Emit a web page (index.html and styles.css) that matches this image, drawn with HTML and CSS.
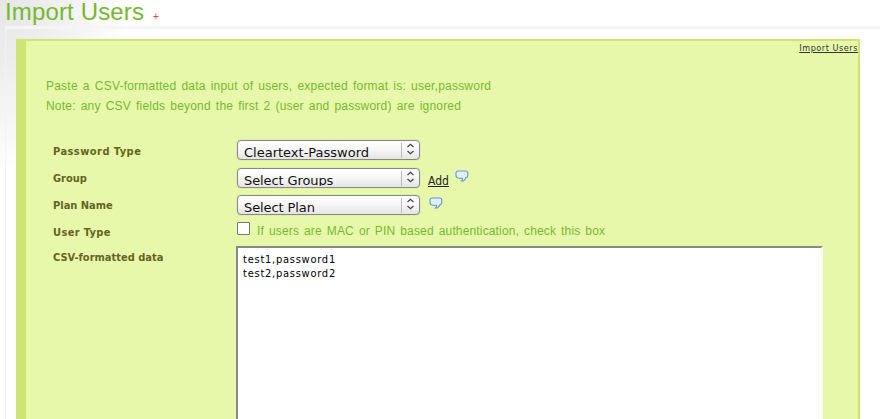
FILE: index.html
```html
<!DOCTYPE html>
<html lang="en">
<head>
<meta charset="utf-8">
<title>Import Users</title>
<link rel="stylesheet" href="styles.css">
</head>
<body>
<h1><span class="title">Import Users</span><span class="plus">+</span></h1>
<main>
<section class="panel">
<a class="tab"><span>Import Users</span></a>
<div class="intro">
<p><span class="i1">Paste a CSV-formatted data input of users, expected format is: user,password</span></p>
<p><span class="i2">Note: any CSV fields beyond the first 2 (user and password) are ignored</span></p>
</div>
<form>
<div class="row password"><label>Password Type</label><div class="select"><span>Cleartext-Password</span><i><svg width="9" height="12" viewBox="0 0 9 12"><path d="M1.5 4 4.5 1.2 7.5 4M1.5 8 4.5 10.8 7.5 8"/></svg></i></div></div>
<div class="row group"><label>Group</label><div class="select"><span>Select Groups</span><i><svg width="9" height="12" viewBox="0 0 9 12"><path d="M1.5 4 4.5 1.2 7.5 4M1.5 8 4.5 10.8 7.5 8"/></svg></i></div><a class="add">Add</a><svg class="tip" width="14" height="12" viewBox="0 0 14 12"><path d="M3.5 1H10.5Q12.800 1 12.800 3V5.500Q12.800 7.500 10.700 7.900 10.500 9.500 8.500 10.900L6.500 11Q8 9.500 7.500 8.200H4Q1 7.800 1 5.500V3Q1 1 3.500 1Z"/></svg></div>
<div class="row plan"><label>Plan Name</label><div class="select"><span>Select Plan</span><i><svg width="9" height="12" viewBox="0 0 9 12"><path d="M1.5 4 4.5 1.2 7.5 4M1.5 8 4.5 10.8 7.5 8"/></svg></i></div><svg class="tip" width="14" height="12" viewBox="0 0 14 12"><path d="M3.5 1H10.5Q12.800 1 12.800 3V5.500Q12.800 7.500 10.700 7.900 10.500 9.500 8.500 10.900L6.500 11Q8 9.500 7.500 8.200H4Q1 7.800 1 5.500V3Q1 1 3.500 1Z"/></svg></div>
<div class="row type"><label>User Type</label><span class="check"></span><span class="hint">If users are MAC or PIN based authentication, check this box</span></div>
<div class="row data"><label>CSV-formatted data</label><div class="area"><span>test1,password1</span><br><span>test2,password2</span></div></div>
</form>
</section>
</main>
</body>
</html>
```
FILE: styles.css
```css
* { box-sizing: border-box; }
body { margin: 0; height: 419px; overflow: hidden; font: 12px "Liberation Sans", sans-serif; color: #76b82f;
  background: #fff radial-gradient(ellipse 130px 175px at 0 0, #e6e6e6 0, #ededed 35%, #fff 100%) no-repeat; }
h1 { margin: 0; height: 26px; padding-left: 5px; display: flex; align-items: flex-start; font-weight: 400; font-size: 24px; line-height: 24px; white-space: nowrap; }
.title { width: 139px; height: 26px; letter-spacing: .15px; }
.plus { margin: 9px 0 0 9px; color: #f33; font-size: 10px; line-height: 16px; }
main { margin-left: 5px; height: 393px; overflow: hidden; border-top: 3px solid #f5f5f5; border-left: 1px solid #f3f3f3; padding: 10px 20px 0 10px; }
.panel { width: 844px; height: 380px; overflow: hidden; background: #e8f8ab; border: 2px solid #cee574; border-left-width: 10px; border-bottom: 0; }
.tab { display: block; height: 39px; text-align: right; font: 9px/14px "DejaVu Sans Condensed", "DejaVu Sans", sans-serif; letter-spacing: .55px; color: #333; text-decoration: underline; }
.intro { padding-left: 20px; margin-top: -4px; }
.intro p { margin: 0; height: 20px; line-height: 20px; white-space: nowrap; }
.i1, .i2, .hint { letter-spacing: .22px; word-spacing: 1.5px; }
.i2 { letter-spacing: .2px; }
form { padding: 24px 0 0 27px; }
.row { display: flex; align-items: flex-start; height: 27px; }
label { width: 184px; flex: none; color: #65651f; font: bold 11px/23px "DejaVu Sans Condensed", "DejaVu Sans", sans-serif; white-space: nowrap; }
.password label { letter-spacing: .45px; }
.type label { letter-spacing: .35px; }
.select { width: 183px; height: 20px; display: flex; border: 1px solid #888; border-radius: 4px; background: linear-gradient(#fff, #f6f6f6 50%, #e4e4e4); color: #111; overflow: hidden; box-shadow: 0 0 1px #999; }
.select span { width: 163px; height: 17px; overflow: hidden; padding: 3px 0 0 6px; font: 13px/18px "DejaVu Sans", sans-serif; white-space: nowrap; }
.select i { width: 18px; height: 15px; margin-top: 2px; border-left: 1px solid #bbb; padding-left: 4px; }
.select svg { display: block; fill: none; stroke: #444; stroke-width: 1.2; }
.group .select, .plan .select { margin-top: 1px; }
.group .select span, .plan .select span { letter-spacing: -.1px; }
.add { margin: 6px 0 0 8px; width: 21px; color: #222; font: 12px/17px "DejaVu Sans Condensed", sans-serif; text-decoration: underline; }
.tip { margin: 3px 0 0 6px; fill: #e2f1ff; stroke: #6598cc; stroke-width: 1.1; }
.plan .tip { margin: 3px 0 0 9px; }
.check { width: 13px; height: 13px; margin-top: 1px; background: #fff; border: 1px solid #777; border-radius: 1px; }
.type { height: 25px; }
.hint { margin-left: 7px; line-height: 21px; white-space: nowrap; letter-spacing: .15px; }
.area { width: 587px; height: 200px; margin: 0 0 0 -1px; border: 2px solid #888; border-right-color: #f8f8f8; background: #fff; padding: 5px 5px; font: 11px/14px "DejaVu Sans Condensed", sans-serif; letter-spacing: .75px; color: #000; }
```
